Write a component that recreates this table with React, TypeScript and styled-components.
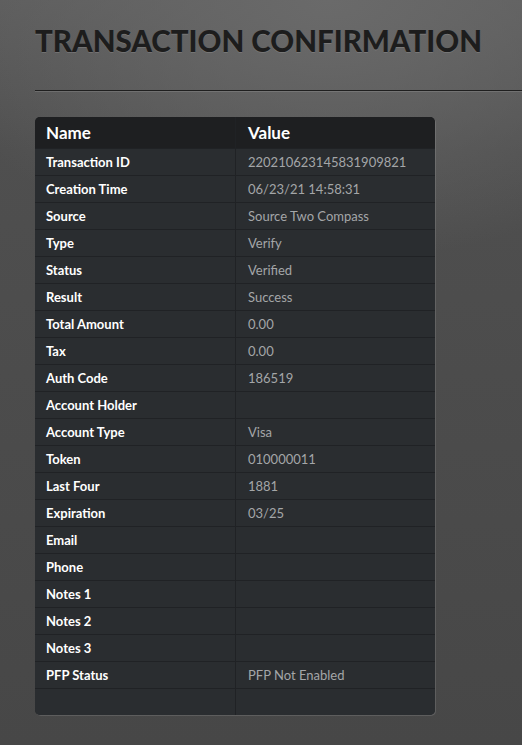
import React from "react";
import styled, { createGlobalStyle } from "styled-components";

const Global = createGlobalStyle`
  html, body { margin: 0; padding: 0; }
  body {
    width: 522px;
    min-height: 745px;
    background: radial-gradient(ellipse 420px 260px at 330px 0px, #6a6a6a 0%, rgba(100,100,100,0) 100%),
      linear-gradient(180deg, #5c5c5c 0%, #4f4f4f 20%, #474747 100%);
    font-family: Lato, "Open Sans", sans-serif;
    overflow: hidden;
  }
`;

const Page = styled.div`
  padding: 23px 0 0 35px;
  height: 722px;
`;

const Title = styled.h1`
  margin: 0;
  font-family: Lato, sans-serif;
  font-weight: 900;
  font-size: 29.5px;
  line-height: 36px;
  letter-spacing: 0;
  color: #1d1d1d;
  text-shadow: 0 1px 0 rgba(255,255,255,0.12);
  padding-bottom: 31px;
  border-bottom: 1px solid #1f1f1f;
  box-shadow: 0 1px 0 rgba(255,255,255,0.12);
`;

const Table = styled.div`
  margin-top: 26px;
  width: 400px;
  border-radius: 5px;
  overflow: hidden;
  background: #2a2d30;
  box-shadow: 1px 1px 0 rgba(255,255,255,0.12);
`;

const Row = styled.div<{ $head?: boolean }>`
  display: grid;
  grid-template-columns: 200px 200px;
  height: ${(p) => (p.$head ? "31px" : "27px")};
  background: ${(p) => (p.$head ? "#1e1f21" : "#2a2d30")};
  border-top: ${(p) => (p.$head ? "none" : "1px solid #202225")};
  box-sizing: border-box;
`;

const Cell = styled.div<{ $kind: "head" | "name" | "value" }>`
  display: flex;
  align-items: center;
  padding-left: 12px;
  padding-bottom: 1px;
  border-left: ${(p) => (p.$kind === "value" || p.$kind === "head" ? "1px solid #202225" : "none")};
  font-size: ${(p) => (p.$kind === "head" ? "17px" : "13px")};
  font-weight: ${(p) => (p.$kind === "value" ? 400 : 700)};
  color: ${(p) => (p.$kind === "value" ? "#a4a6a8" : "#ffffff")};
  &:first-child { border-left: none; padding-left: 11px; }
`;

const rows: [string, string][] = [
  ["Transaction ID", "220210623145831909821"],
  ["Creation Time", "06/23/21 14:58:31"],
  ["Source", "Source Two Compass"],
  ["Type", "Verify"],
  ["Status", "Verified"],
  ["Result", "Success"],
  ["Total Amount", "0.00"],
  ["Tax", "0.00"],
  ["Auth Code", "186519"],
  ["Account Holder", ""],
  ["Account Type", "Visa"],
  ["Token", "010000011"],
  ["Last Four", "1881"],
  ["Expiration", "03/25"],
  ["Email", ""],
  ["Phone", ""],
  ["Notes 1", ""],
  ["Notes 2", ""],
  ["Notes 3", ""],
  ["PFP Status", "PFP Not Enabled"],
  ["", ""],
];

export default function App() {
  return (
    <>
      <Global />
      <Page>
        <Title>TRANSACTION CONFIRMATION</Title>
        <Table>
          <Row $head>
            <Cell $kind="head">Name</Cell>
            <Cell $kind="head">Value</Cell>
          </Row>
          {rows.map(([n, v], i) => (
            <Row key={i}>
              <Cell $kind="name">{n}</Cell>
              <Cell $kind="value">{v}</Cell>
            </Row>
          ))}
        </Table>
      </Page>
    </>
  );
}
